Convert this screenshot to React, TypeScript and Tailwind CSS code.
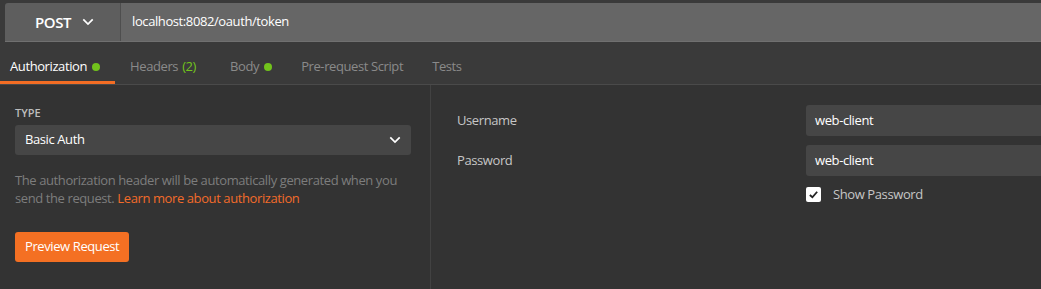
import React from 'react'

const Chevron = ({ className }: { className?: string }) => (
  <svg viewBox="0 0 14 9" fill="none" stroke="currentColor" strokeWidth={2} className={className}>
    <path d="M1.5 1.5 7 7l5.5-5.5" />
  </svg>
)

const Dot = () => <span className="inline-block w-[8px] h-[8px] rounded-full bg-[#72c31c] ml-[5px]" />

const App = () => {
  return (
    <div className="w-[1041px] h-[289px] bg-[#333333] text-[13px] tracking-[-0.4px] overflow-hidden" style={{ fontFamily: '"Open Sans", sans-serif' }}>
      {/* request bar */}
      <div className="bg-[#3a3a3a] pt-[3px] pl-[5px] h-[42px]">
        <div className="flex h-[39px] border-b border-[#707070] rounded-tl-[3px] overflow-hidden">
          <div className="w-[116px] bg-[#5e5e5e] flex items-center pl-[30px] text-white text-[15px] font-semibold border-r border-[#4e4e4e]">
            POST
            <Chevron className="w-[12px] h-[8px] ml-[11px] text-white" />
          </div>
          <div className="flex-1 bg-[#666666] flex items-center pl-[11px] text-white">
            localhost:8082/oauth/token
          </div>
        </div>
      </div>

      {/* tabs */}
      <div className="flex h-[43px] bg-[#3a3a3a] border-b border-[#4a4a4a]">
        <div className="flex items-center pl-[10px] pr-[15px] pt-[10px] text-white border-b-[3px] border-[#f36d24]">
          Authorization <Dot />
        </div>
        <div className="flex items-center pl-[15px] pr-[19px] pt-[7px] text-[#8a8a8a]">
          Headers <span className="text-[#72c31c] ml-[4px]">(2)</span>
        </div>
        <div className="flex items-center px-[15px] pt-[7px] text-[#8a8a8a]">
          Body <Dot />
        </div>
        <div className="flex items-center pl-[14px] pr-[14px] pt-[7px] text-[#8a8a8a]">Pre-request Script</div>
        <div className="flex items-center px-[15px] pt-[7px] text-[#8a8a8a]">Tests</div>
      </div>

      {/* content */}
      <div className="flex h-[204px]">
        <div className="w-[431px] border-r border-[#424242] px-[15px] pt-[21px]">
          <div className="text-[11px] font-semibold text-[#bdbdbd] leading-[14px] tracking-normal">TYPE</div>
          <div className="mt-[5px] h-[30px] w-[396px] bg-[#464646] rounded-[3px] flex items-center justify-between pl-[10px] pr-[10px] text-white">
            Basic Auth
            <Chevron className="w-[12px] h-[8px] text-white" />
          </div>
          <p className="mt-[16px] text-[#7d7d7d] leading-[18px] w-[396px]">
            The authorization header will be automatically generated when you send the request.{' '}
            <span className="text-[#f26b2a]">Learn more about authorization</span>
          </p>
          <button className="mt-[25px] h-[30px] px-[10px] bg-[#f47023] rounded-[3px] text-white text-[13px]">
            Preview Request
          </button>
        </div>

        <div className="flex-1 pt-[20px]">
          <div className="flex items-center h-[31px]">
            <div className="w-[375px] pl-[26px] text-[#c6c6c6]">Username</div>
            <div className="flex-1 h-[31px] bg-[#464646] rounded-l-[3px] flex items-center pl-[9px] text-white">web-client</div>
          </div>
          <div className="flex items-center h-[31px] mt-[9px]">
            <div className="w-[375px] pl-[26px] text-[#c6c6c6]">Password</div>
            <div className="flex-1 h-[31px] bg-[#464646] rounded-l-[3px] flex items-center pl-[9px] text-white">web-client</div>
          </div>
          <div className="flex items-center mt-[9px] pl-[375px]">
            <span className="w-[15px] h-[15px] bg-white rounded-[2px] flex items-center justify-center">
              <svg viewBox="0 0 12 12" className="w-[11px] h-[11px]" fill="none" stroke="#222" strokeWidth={2}>
                <path d="M2 6.5 4.8 9 10 3" />
              </svg>
            </span>
            <span className="ml-[12px] text-[#c6c6c6]">Show Password</span>
          </div>
        </div>
      </div>
    </div>
  )
}

export default App
